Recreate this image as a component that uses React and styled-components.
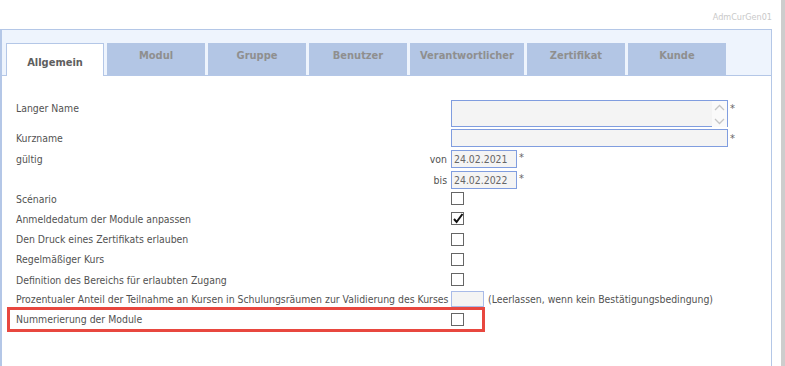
import React from 'react';
import styled, { createGlobalStyle } from 'styled-components';

const GlobalStyle = createGlobalStyle`
  html, body {
    margin: 0;
    padding: 0;
    background: #fff;
  }
  body {
    font-family: "DejaVu Sans Condensed", "DejaVu Sans", sans-serif;
    font-stretch: condensed;
    font-size: 10.4px;
    color: #525252;
  }
`;

const tabs = [
  { id: 'allgemein', label: 'Allgemein' },
  { id: 'modul', label: 'Modul' },
  { id: 'gruppe', label: 'Gruppe' },
  { id: 'benutzer', label: 'Benutzer' },
  { id: 'verantwortlicher', label: 'Verantwortlicher' },
  { id: 'zertifikat', label: 'Zertifikat' },
  { id: 'kunde', label: 'Kunde' }
];

const checkRows = [
  { label: 'Scénario', h: 19, checked: false },
  { label: 'Anmeldedatum der Module anpassen', h: 21, checked: true },
  { label: 'Den Druck eines Zertifikats erlauben', h: 20, checked: false },
  { label: 'Regelmäßiger Kurs', h: 20, checked: false },
  { label: 'Definition des Bereichs für erlaubten Zugang', h: 21, checked: false }
];

const Page = styled.div`
  display: flex;
  height: 100vh;
  overflow: hidden;
`;

const Main = styled.div`
  flex: 1;
  min-width: 0;
  display: flex;
  flex-direction: column;
  padding-right: 9px;
`;

const ScrollStrip = styled.div`
  width: 4px;
  background: #cdcdcd;
`;

const TopBar = styled.div`
  height: 29px;
  box-sizing: border-box;
  padding-top: 5px;
  display: flex;
  align-items: center;
  justify-content: flex-end;
  font-size: 9px;
  color: #c9c9c9;
`;

const Panel = styled.div`
  flex: 1;
  display: flex;
  flex-direction: column;
  border: 1px solid #b4c7e7;
  border-left-width: 2px;
  border-bottom: none;
`;

const TabStrip = styled.div`
  height: 46px;
  box-sizing: border-box;
  display: flex;
  align-items: flex-end;
  gap: 3px;
  padding-left: 4px;
  background: #eef4fd;
  border-bottom: 1px solid #b4c7e7;
`;

const Tab = styled.div`
  min-width: 98px;
  box-sizing: border-box;
  padding: ${p => (p.$active ? '12px 10px 0' : '6px 10px 0')};
  height: ${p => (p.$active ? '33px' : '32px')};
  margin-bottom: ${p => (p.$active ? '-1px' : '0')};
  position: relative;
  z-index: ${p => (p.$active ? 1 : 0)};
  background: ${p => (p.$active ? '#fff' : '#b3c6e5')};
  border: ${p => (p.$active ? '1px solid #b4c7e7' : 'none')};
  border-bottom: none;
  font-size: 11px;
  line-height: 13px;
  font-weight: bold;
  color: ${p => (p.$active ? '#5e5e5e' : '#8f8f8f')};
  text-align: center;
  white-space: nowrap;
`;

const Form = styled.div`
  padding: 23px 14px 0;
`;

const Row = styled.div`
  position: relative;
  display: grid;
  grid-template-columns: 435px 1fr;
  height: ${p => p.$h}px;
`;

const Label = styled.div`
  display: flex;
  align-items: ${p => (p.$top ? 'flex-start' : 'center')};
  justify-content: ${p => (p.$right ? 'flex-end' : 'flex-start')};
  padding-top: 1px;
  padding-right: 4px;
  line-height: 17px;
  white-space: nowrap;
`;

const Spacer = styled.span`
  flex: 1;
`;

const Field = styled.div`
  display: flex;
  align-items: center;
`;

const Group = styled.div`
  display: flex;
  align-items: flex-start;
`;

const Required = styled.span`
  margin-left: 2px;
  margin-top: ${p => p.$offset || 2}px;
  font-size: 11px;
  line-height: 11px;
  color: #666;
`;

const TextAreaBox = styled.div`
  width: 277px;
  height: 27px;
  box-sizing: border-box;
  display: flex;
  border: 1px solid #809ddf;
  background: #f4f4f4;
`;

const TextArea = styled.textarea`
  flex: 1;
  border: none;
  background: transparent;
  resize: none;
  outline: none;
  padding: 1px 2px;
  font: inherit;
  color: #666;
`;

const Gutter = styled.div`
  width: 15px;
  margin-bottom: -1px;
  background: #fafafa;
  display: flex;
  flex-direction: column;
  align-items: center;
  justify-content: space-between;
  padding: 3px 0 2px;
  box-sizing: border-box;
`;

const TextInput = styled.input`
  width: ${p => p.$w}px;
  height: ${p => p.$hgt || 18}px;
  box-sizing: border-box;
  border: 1px solid ${p => (p.$soft ? '#a9bbe8' : '#809ddf')};
  background: #f4f4f4;
  padding: 0 2px;
  font: inherit;
  color: #666;
  outline: none;
`;

const Box = styled.span`
  width: 13px;
  height: 13px;
  box-sizing: border-box;
  border: 1px solid #666;
  background: #fff;
  position: relative;
  display: inline-block;

  svg {
    position: absolute;
    left: -1px;
    top: -2px;
    overflow: visible;
  }
`;

const Hint = styled.span`
  margin-left: 4px;
  white-space: nowrap;
`;

const Highlight = styled.div`
  position: absolute;
  top: -1px;
  bottom: -2px;
  left: -9px;
  width: 478px;
  box-sizing: border-box;
  border: 3px solid #e8473f;
  pointer-events: none;
`;

const Chevron = ({ up }) => (
  <svg width="11" height="7" viewBox="0 0 11 7">
    <path
      d={up ? 'M1 6 L5.5 1.5 L10 6' : 'M1 1 L5.5 5.5 L10 1'}
      fill="none"
      stroke="#c6c6c6"
      strokeWidth="1.3"
    />
  </svg>
);

const Checkbox = ({ checked }) => (
  <Box>
    {checked && (
      <svg width="14" height="14" viewBox="0 0 14 14">
        <path d="M3 8 L5.6 11 L11.5 3" fill="none" stroke="#111" strokeWidth="2" />
      </svg>
    )}
  </Box>
);

export default function App() {
  return (
    <>
      <GlobalStyle />
      <Page>
        <Main>
          <TopBar>AdmCurGen01</TopBar>
          <Panel>
            <TabStrip>
              {tabs.map((t, i) => (
                <Tab key={t.id} $active={i === 0}>{t.label}</Tab>
              ))}
            </TabStrip>
            <Form>
              <Row $h={28}>
                <Label $top>Langer Name</Label>
                <Field>
                  <Group>
                    <TextAreaBox>
                      <TextArea rows={2} />
                      <Gutter>
                        <Chevron up />
                        <Chevron />
                      </Gutter>
                    </TextAreaBox>
                    <Required $offset={3}>*</Required>
                  </Group>
                </Field>
              </Row>
              <Row $h={21}>
                <Label>Kurzname</Label>
                <Field>
                  <Group>
                    <TextInput $w={277} />
                    <Required $offset={4}>*</Required>
                  </Group>
                </Field>
              </Row>
              <Row $h={22}>
                <Label>
                  gültig
                  <Spacer />
                  von
                </Label>
                <Field>
                  <Group>
                    <TextInput $w={66} defaultValue="24.02.2021" />
                    <Required>*</Required>
                  </Group>
                </Field>
              </Row>
              <Row $h={19}>
                <Label $right>bis</Label>
                <Field>
                  <Group>
                    <TextInput $w={66} defaultValue="24.02.2022" />
                    <Required>*</Required>
                  </Group>
                </Field>
              </Row>
              {checkRows.map(r => (
                <Row key={r.label} $h={r.h}>
                  <Label>{r.label}</Label>
                  <Field>
                    <Checkbox checked={r.checked} />
                  </Field>
                </Row>
              ))}
              <Row $h={18}>
                <Label>Prozentualer Anteil der Teilnahme an Kursen in Schulungsräumen zur Validierung des Kurses</Label>
                <Field>
                  <TextInput $w={33} $hgt={16} $soft />
                  <Hint>(Leerlassen, wenn kein Bestätigungsbedingung)</Hint>
                </Field>
              </Row>
              <Row $h={22}>
                <Label>Nummerierung der Module</Label>
                <Field>
                  <Checkbox />
                </Field>
                <Highlight />
              </Row>
            </Form>
          </Panel>
        </Main>
        <ScrollStrip />
      </Page>
    </>
  );
}
